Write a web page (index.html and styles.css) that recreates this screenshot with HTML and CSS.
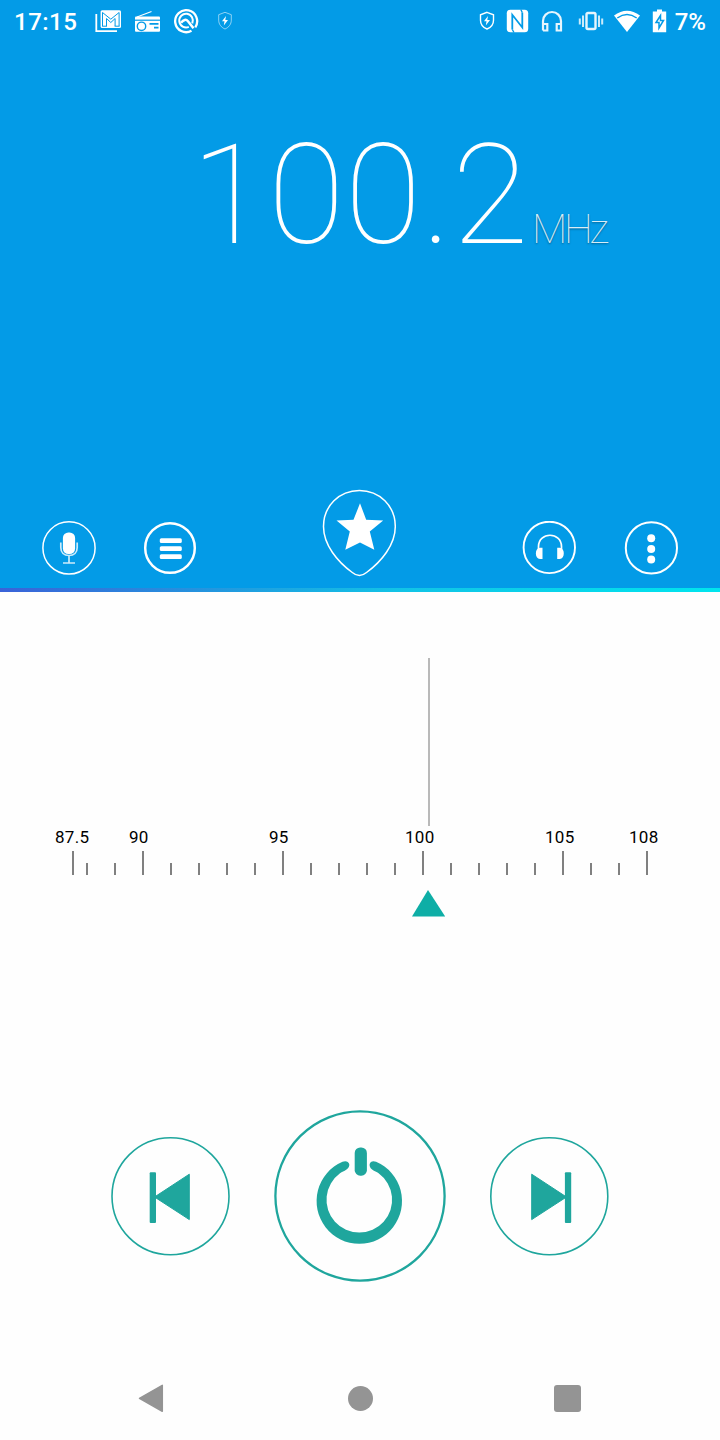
FILE: index.html
```
<!DOCTYPE html>
<html lang="en">

<head>
  <meta charset="UTF-8">
  <meta name="viewport" content="width=device-width, initial-scale=1.0">
  <title>FM Radio</title>
  <link rel="stylesheet" href="styles.css">
</head>

<body>
  <header class="display">
    <div class="status-bar">
      <span class="clock">17:15</span>
      <div class="status-icons status-left">
        <svg width="27" height="25" viewBox="0 0 27 25">
          <path d="M1.3 5v17.200h20.700" fill="none" stroke="#fff" stroke-width="1.800" />
          <rect x="5.600" y="1.200" width="20.400" height="17.800" rx="1.500" fill="#fff" />
          <path d="M7.500 17V3.500l8.300 6.700 8.300-6.700V17M11.500 17V9.500l4.300 4 4.300-4V17M7 17.200h5M19.600 17.200h5" fill="none" stroke="#039be7" stroke-width="1" />
        </svg>
        <svg width="27" height="25" viewBox="0 0 27 25">
          <path d="M3 8l14.500-5.500" stroke="#fff" stroke-width="1.100" />
          <rect x="1" y="7.400" width="25" height="15.400" rx="1" fill="#fff" />
          <path d="M1 11.200h25" stroke="#039be7" stroke-width="1.200" />
          <circle cx="7.500" cy="17.300" r="4.200" fill="none" stroke="#039be7" stroke-width="1.400" />
          <path d="M15.500 14.800h9M20 18.600h4.500" stroke="#039be7" stroke-width="1.800" />
        </svg>
        <svg width="26" height="25" viewBox="0 0 26 25">
          <path d="M18.500 21.800a11 11 0 1 1 3.800-3.500" fill="none" stroke="#fff" stroke-width="2.300" />
          <path d="M15.800 17.800a6.800 6.800 0 1 1 3.500-3.500" fill="none" stroke="#fff" stroke-width="2" />
          <path d="M8 13.800q4-5 7-1.500l5.500 7" fill="none" stroke="#fff" stroke-width="2.500" />
        </svg>
        <svg class="dim" width="16" height="20" viewBox="0 0 16 20">
          <path d="M8 1.300l6.300 2.400v5.500c0 4-2.600 7.300-6.300 8.800-3.700-1.500-6.300-4.800-6.300-8.800V3.700z" fill="none" stroke="#fff" stroke-opacity=".55" />
          <path d="M9 5l-4 5.300h2.500l-.7 4.200 4.200-5.500H8.300z" fill="#fff" />
        </svg>
      </div>
      <div class="status-icons status-right">
        <svg width="16" height="20" viewBox="0 0 16 20">
          <path d="M8 1.300l6.500 2.500v5.400c0 4-2.700 7.300-6.500 8.800-3.800-1.500-6.500-4.800-6.500-8.800V3.800z" fill="none" stroke="#fff" stroke-width="1.400" />
          <path d="M9 5l-4 5.300h2.500l-.7 4.200 4.200-5.500H8.300z" fill="#fff" />
        </svg>
        <svg class="nfc" width="23" height="24" viewBox="0 0 23 24">
          <rect x=".8" y=".8" width="21.400" height="22.400" rx="3.500" fill="#fff" />
          <path d="M6.300 20.500V5.800l10 12.700V3.500" fill="none" stroke="#039be7" stroke-width="1.800" />
          <path d="M8 23.500l-1.700-3M14.800.5l1.500 3" stroke="#039be7" stroke-width="1.400" />
        </svg>
        <svg class="phones" width="22" height="23" viewBox="0 0 22 23">
          <path d="M2 20.500V11a9 9 0 0 1 18 0v9.500h-4.300V14H20M2 14h4.300v6.500H2" fill="none" stroke="#fff" stroke-opacity=".9" stroke-width="2.200" />
        </svg>
        <svg class="vibrate" width="26" height="21" viewBox="0 0 26 21">
          <rect x="8.500" y="2" width="9" height="16" rx="1.500" fill="none" stroke="#fff" stroke-opacity=".9" stroke-width="2.400" />
          <path d="M5 4.500v11.500M21 4.500v11.500M1.800 7.500v6M24.200 7.500v6" stroke="#fff" stroke-width="2" stroke-opacity=".8" />
        </svg>
        <svg class="wifi" width="28" height="23" viewBox="0 0 28 23">
          <path d="M14 22L1 5.500Q14-4 27 5.500z" fill="#fff" />
          <path d="M4.300 8Q14 1.200 23.700 8" fill="none" stroke="#039be7" stroke-width="1.500" />
        </svg>
        <svg class="battery" width="15" height="24" viewBox="0 0 15 24">
          <path d="M5 .5h5v2h4.200v20.800H.8V2.500H5z" fill="#fff" />
          <path d="M8.500 6.500L4 13.500h3v5.500l4.500-7.500H8.500z" fill="#fff" stroke="#039be7" stroke-width="1.500" />
        </svg>
      </div>
      <span class="battery-level">7%</span>
    </div>

    <div class="frequency">
      <span class="value">100.2</span><span class="unit">MHz</span>
    </div>

    <div class="actions">
      <svg class="mic" width="54" height="54" viewBox="0 0 54 54">
        <circle cx="27" cy="26.900" r="26.100" fill="none" stroke="#fff" stroke-width="1.500" />
        <rect x="20.900" y="11.500" width="12.200" height="21.500" rx="5.500" fill="#fff" />
        <path d="M18.800 21.500v5c0 5 3.200 8 8.200 8s8.200-3 8.200-8v-5M27 34.500v7M21 42h12" fill="none" stroke="#fff" stroke-opacity=".8" stroke-width="1.700" />
      </svg>
      <svg class="menu" width="54" height="54" viewBox="0 0 54 54">
        <circle cx="27" cy="27" r="24.800" fill="none" stroke="#fff" stroke-width="2.500" />
        <rect x="16.800" y="17.300" width="22" height="4.600" rx="1.500" fill="#fff" />
        <rect x="16.800" y="25.300" width="22" height="4.600" rx="1.500" fill="#fff" />
        <rect x="16.800" y="33.300" width="22" height="4.600" rx="1.500" fill="#fff" />
      </svg>
      <svg class="favorite" width="76" height="88" viewBox="0 0 76 88">
        <path d="M37.400 1.500C57.500 1.500 73.300 17 73.300 37.500C73.300 56 59 73 44.500 83.500Q37.400 89.500 30.300 83.500C15.800 73 1.500 56 1.500 37.500C1.500 17 17.300 1.500 37.400 1.500z" fill="none" stroke="#fff" stroke-width="1.500" />
        <path d="M38 14.300l6.200 16.500 17 .7-13.400 11 4.500 18.200L38 53.500 23.300 60.700l4.500-18.200L14.500 31.500l17-.7z" fill="#fff" />
      </svg>
      <svg class="headset" width="54" height="54" viewBox="0 0 54 54">
        <circle cx="27.300" cy="26.400" r="25.700" fill="none" stroke="#fff" stroke-width="1.900" />
        <path d="M16.500 28v-2.500C16.500 10.500 39.500 10.500 39.500 25.500V28" fill="none" stroke="#fff" stroke-width="1.700" />
        <path d="M20.500 26.800v11.200h-2.500c-5.500 0-5.500-11.200 0-11.200zM35.200 26.800v11.200h2.500c5.500 0 5.500-11.200 0-11.200z" fill="#fff" />
      </svg>
      <svg class="more" width="54" height="54" viewBox="0 0 54 54">
        <circle cx="27.400" cy="26.900" r="25.600" fill="none" stroke="#fff" stroke-width="2" />
        <circle cx="27.200" cy="17.300" r="4" fill="#fff" />
        <circle cx="27.200" cy="28" r="4" fill="#fff" />
        <circle cx="27.200" cy="38.600" r="4" fill="#fff" />
      </svg>
    </div>
  </header>
  <div class="divider"></div>

  <main class="tuner">
    <div class="needle"></div>
    <div class="labels">
      <span>87.5</span><span>90</span><span>95</span><span>100</span><span>105</span><span>108</span>
    </div>
    <div class="ticks">
      <i class="major first"></i><i></i><i></i>
      <i class="major"></i><i></i><i></i><i></i><i></i>
      <i class="major"></i><i></i><i></i><i></i><i></i>
      <i class="major"></i><i></i><i></i><i></i><i></i>
      <i class="major"></i><i></i><i></i>
      <i class="major"></i>
    </div>
    <svg class="pointer" width="34" height="27" viewBox="0 0 34 27">
      <path d="M16 0L33.200 26.600H0z" fill="#0eaea6" />
    </svg>
  </main>

  <div class="controls">
    <svg width="120" height="120" viewBox="0 0 120 120">
      <circle cx="59.500" cy="60.200" r="58.500" fill="none" stroke="#1fa69d" stroke-width="1.600" />
      <rect x="38.700" y="36.200" width="6.300" height="50.800" rx="1" fill="#1fa69d" />
      <path d="M78.300 38.200v45.400L43.500 61z" fill="#1fa69d" stroke="#1fa69d" stroke-linejoin="round" />
    </svg>
    <svg width="172" height="172" viewBox="0 0 172 172">
      <circle cx="86" cy="86" r="84.600" fill="none" stroke="#1fa69d" stroke-width="2.300" />
      <path d="M68.500 51.800C74 49.200 78.500 55 72.500 59.500C70 61.500 68 61.500 66 63.300A32.800 32.800 0 1 0 104.600 63.300C102.600 61.500 100.600 61.500 98.100 59.500C93 55 96.500 49.200 102.100 51.800A42.700 42.700 0 1 1 68.500 51.800z" fill="#1fa69d" />
      <rect x="80.700" y="37.500" width="12.200" height="28.200" rx="5.500" fill="#1fa69d" />
    </svg>
    <svg width="120" height="120" viewBox="0 0 120 120">
      <circle cx="60.300" cy="60.200" r="58.500" fill="none" stroke="#1fa69d" stroke-width="1.600" />
      <path d="M42.700 38.200v45.400L77.500 61z" fill="#1fa69d" stroke="#1fa69d" stroke-linejoin="round" />
      <rect x="75.900" y="36.200" width="6.300" height="50.800" rx="1" fill="#1fa69d" />
    </svg>
  </div>

  <nav class="nav-bar">
    <svg class="back" width="26" height="30" viewBox="0 0 26 30">
      <path d="M1.500 15.300L24.300 2.300v26z" fill="#949494" stroke="#949494" stroke-width="1.500" stroke-linejoin="round" />
    </svg>
    <div class="home"></div>
    <div class="recent"></div>
  </nav>
</body>

</html>
```
FILE: styles.css
```
body {
  margin: 0;
  width: 720px;
  height: 1440px;
  overflow: hidden;
  background-color: #fefefe;
  font-family: Roboto, sans-serif;
}

svg {
  display: block;
  flex: none;
}

/* blue upper half */
.display {
  display: flex;
  flex-direction: column;
  height: 588px;
  background-color: #039be7;
  color: #fff;
}

.status-bar {
  display: flex;
  align-items: center;
  height: 42px;
  padding: 0 14px 0 14px;
}

.clock,
.battery-level {
  font-size: 24px;
  font-weight: 500;
  line-height: 28px;
  padding-top: 2px;
}

.clock {
  width: 81px;
  letter-spacing: 0.5px;
}

.battery-level {
  margin-left: 8px;
}

.status-icons {
  display: flex;
  align-items: center;
}

.status-left {
  gap: 12px;
}

.status-left .dim {
  margin-left: 6px;
}

.status-right {
  margin-left: auto;
}

.nfc {
  margin-left: 11px;
}

.phones {
  margin-left: 12px;
}

.vibrate {
  margin-left: 15px;
}

.wifi {
  margin-left: 9px;
}

.battery {
  margin-left: 11px;
}

.frequency {
  display: flex;
  align-items: baseline;
  margin-top: 71px;
  padding-left: 191px;
  font-weight: 100;
  white-space: nowrap;
}

.value {
  font-size: 140px;
  line-height: 164px;
  letter-spacing: 0.3px;
}

.unit {
  margin-left: 3px;
  font-size: 41px;
  letter-spacing: -3.2px;
  color: rgba(255, 255, 255, 0.85);
  text-shadow: 0 1px 2px rgba(0, 0, 0, 0.4);
}

.actions {
  display: flex;
  align-items: flex-end;
  height: 88px;
  margin-top: auto;
  margin-bottom: 11px;
  padding-left: 42px;
}

.mic,
.menu,
.headset,
.more {
  margin-bottom: 2px;
}

.menu {
  margin-left: 47px;
}

.favorite {
  margin-left: 125px;
}

.headset {
  margin-left: 124px;
}

.more {
  margin-left: 48px;
}

.divider {
  height: 4px;
  background: linear-gradient(to right, #3a62d8, #1fa0e0 35%, #12c3e6 55%, #00e5ee);
}

/* frequency scale */
.tuner {
  height: 518px;
}

.needle {
  width: 2px;
  height: 168px;
  margin-left: 428px;
  border-top: 66px solid #fefefe;
  background-color: #b9b9b9;
}

.labels {
  display: grid;
  grid-template-columns: 74px 140px 136px 140px 84px 40px;
  padding-left: 55px;
  height: 25px;
  font-size: 17px;
  line-height: 22px;
  letter-spacing: 0.3px;
  color: #000;
}

.ticks {
  display: flex;
  align-items: flex-end;
  gap: 26px;
  height: 24px;
  padding-left: 72px;
}

.ticks i {
  width: 2px;
  height: 12px;
  background-color: #808080;
}

.ticks .major {
  height: 24px;
}

.ticks .first {
  margin-right: -14px;
}

.pointer {
  margin: 15px 0 0 412px;
}

.controls {
  display: flex;
  align-items: center;
  justify-content: center;
  gap: 43px;
  height: 172px;
}

/* system buttons */
.nav-bar {
  display: flex;
  align-items: center;
  height: 30px;
  margin-top: 101px;
  padding-left: 138px;
}

.home {
  width: 25px;
  height: 25px;
  margin-left: 184px;
  border-radius: 50%;
  background-color: #949494;
}

.recent {
  width: 27px;
  height: 27px;
  margin-left: 181px;
  border-radius: 3px;
  background-color: #949494;
}
```
